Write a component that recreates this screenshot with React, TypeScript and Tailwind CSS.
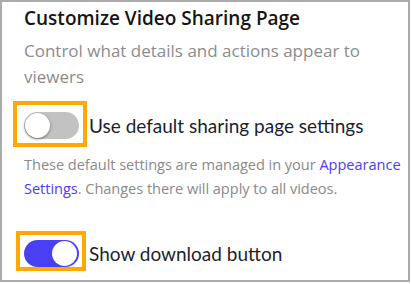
import React from "react";

const Toggle = ({ on }: { on: boolean }) => (
  <span
    className={`relative inline-flex h-[27px] w-[55px] shrink-0 items-center rounded-full ${
      on ? "bg-[#4b3ff4]" : "bg-[#c2c2c2]"
    }`}
  >
    <span
      className={`absolute top-[1px] h-[25px] w-[25px] rounded-full bg-white ${
        on ? "right-[2px]" : "left-[1px] shadow-[0_1px_3px_rgba(0,0,0,0.45)]"
      }`}
    />
  </span>
);

const Highlight = ({ className }: { className: string }) => (
  <span className={`pointer-events-none absolute border-4 border-[#ffa800] ${className}`} />
);

export default function App() {
  return (
    <div className="h-[282px] w-[410px] overflow-hidden border-2 border-[#ababab] bg-white pl-[22px] pt-[3px] font-['Open_Sans',sans-serif]">
      <h2 className="text-[19px] font-semibold leading-[26px] text-[#151515]">
        Customize Video Sharing Page
      </h2>
      <p className="mt-[7px] pr-4 text-[17px] leading-[26px] text-[#8c8c8c]">
        Control what details and actions appear to viewers
      </p>

      <div className="mt-[22px] flex items-center gap-[10px]">
        <span className="relative inline-flex">
          <Toggle on={false} />
          <Highlight className="-left-[11px] -top-[11px] -right-[8px] -bottom-[8px]" />
        </span>
        <span className="font-['Lato',sans-serif] text-[19px] leading-[26px] text-[#1b1f30]">
          Use default sharing page settings
        </span>
      </div>

      <p className="-mr-[2px] mt-[13px] text-[14.6px] leading-[24px] tracking-[-0.05px] text-[#8a8a8a]">
        These default settings are managed in your{" "}
        <a className="text-[#4f3cf2]">Appearance Settings</a>. Changes there will apply to all videos.
      </p>

      <div className="mt-[40px] flex items-center gap-[10px]">
        <span className="relative inline-flex">
          <Toggle on={true} />
          <Highlight className="-left-[8px] -top-[9px] -right-[7px] -bottom-[4px]" />
        </span>
        <span className="font-['Lato',sans-serif] text-[19px] leading-[26px] text-[#1b1f30]">
          Show download button
        </span>
      </div>
    </div>
  );
}
